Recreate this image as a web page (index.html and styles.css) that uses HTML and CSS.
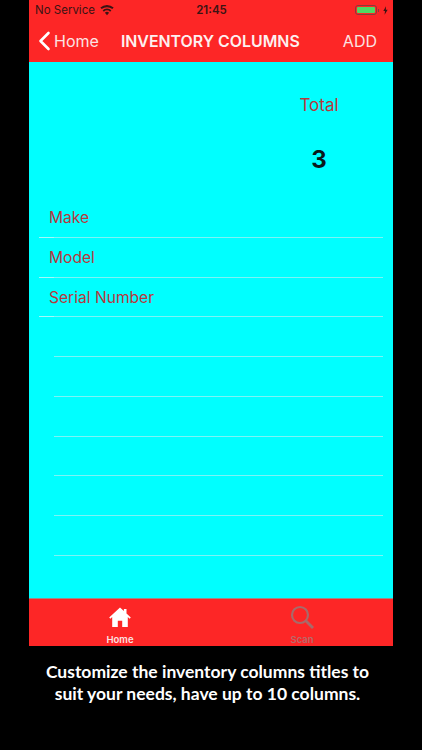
FILE: index.html
```html
<!DOCTYPE html>
<html lang="en">
<head>
    <meta charset="UTF-8">
    <meta name="viewport" content="width=device-width, initial-scale=1.0">
    <title>Inventory Columns</title>
    <link rel="stylesheet" href="styles.css">
</head>
<body>
    <div class="phone">
        <!-- status bar -->
        <div class="status-bar">
            <div class="status-left">
                <span>No Service</span>
                <svg class="wifi" viewBox="0 0 16 12" width="14" height="11">
                    <path d="M8 11.5 5.6 8.6a3.6 3.6 0 0 1 4.8 0z" fill="#3a1414"/>
                    <path d="M4.4 7.3 3 5.6a7.6 7.6 0 0 1 10 0l-1.4 1.7a5.5 5.5 0 0 0-7.2 0z" fill="#3a1414"/>
                    <path d="M1.9 4.4.4 2.7a11.5 11.5 0 0 1 15.2 0l-1.5 1.7a9.4 9.4 0 0 0-12.2 0z" fill="#3a1414"/>
                </svg>
            </div>
            <div class="status-time">21:45</div>
            <div class="status-right">
                <div class="battery"><div class="battery-fill"></div></div>
                <div class="battery-tip"></div>
                <svg class="bolt" viewBox="0 0 6 10" width="5" height="9">
                    <path d="M3.6 0 .4 5.6h2L1.9 10 5.6 4H3.4z" fill="#3a1414"/>
                </svg>
            </div>
        </div>

        <!-- nav bar -->
        <div class="nav-bar">
            <div class="nav-back">
                <svg viewBox="0 0 13 20" width="13" height="20">
                    <path d="M10.5 2 2.5 10l8 8" fill="none" stroke="#fff" stroke-width="2.6" stroke-linecap="round" stroke-linejoin="round"/>
                </svg>
                <span>Home</span>
            </div>
            <div class="nav-title">INVENTORY COLUMNS</div>
            <div class="nav-add">ADD</div>
        </div>

        <!-- content -->
        <div class="content">
            <div class="total">
                <div class="total-label">Total</div>
                <div class="total-value">3</div>
            </div>
            <div class="list">
                <div class="row row-full">Make</div>
                <div class="row row-full">Model</div>
                <div class="row row-full">Serial Number</div>
                <div class="row"></div>
                <div class="row"></div>
                <div class="row"></div>
                <div class="row"></div>
                <div class="row"></div>
                <div class="row"></div>
            </div>
        </div>

        <!-- tab bar -->
        <div class="tab-bar">
            <div class="tab tab-active">
                <svg viewBox="0 0 24 24" width="24" height="24">
                    <path d="M12 2.5 1.2 12.4l1.2 1.3 1.8-1.6V22h5.6v-6.2h4.4V22h5.6v-9.9l1.8 1.6 1.2-1.3L18.5 8.5V4h-2.6v2.1z" fill="#fff"/>
                </svg>
                <span>Home</span>
            </div>
            <div class="tab tab-off">
                <svg viewBox="0 0 24 24" width="24" height="24">
                    <circle cx="10" cy="10" r="8" fill="none" stroke="#a86a6a" stroke-width="2.2"/>
                    <path d="M15.8 15.8 23 23" fill="none" stroke="#a86a6a" stroke-width="2.8"/>
                </svg>
                <span>Scan</span>
            </div>
        </div>
    </div>

    <p class="caption">Customize the inventory columns titles to<br>suit your needs, have up to 10 columns.</p>
</body>
</html>
```

FILE: styles.css
```css
html, body {
    margin: 0;
    padding: 0;
    background: #000;
    height: 750px;
    overflow: hidden;
}

.phone {
    width: 364px;
    margin-left: 29px;
    font-family: Inter, "Liberation Sans", sans-serif;
}

/* status bar */
.status-bar {
    height: 20px;
    background: #fd2626;
    color: #3a1414;
    font-size: 11.5px;
    display: grid;
    grid-template-columns: 1fr auto 1fr;
    align-items: center;
    padding: 0 5px 0 6px;
}

.status-left {
    display: flex;
    align-items: center;
    gap: 5px;
}

.status-time {
    font-weight: 600;
    font-size: 11.5px;
}

.status-right {
    display: flex;
    align-items: center;
    justify-content: flex-end;
}

.battery {
    width: 22px;
    height: 10px;
    border: 1px solid #8a3a3a;
    border-radius: 3px;
    padding: 1px;
    box-sizing: border-box;
    display: flex;
}

.battery-fill {
    flex: 1;
    background: #4fd964;
    border-radius: 1px;
}

.battery-tip {
    width: 1px;
    height: 3px;
    background: #8a3a3a;
    margin: 0 4px 0 1px;
}

/* nav bar */
.nav-bar {
    height: 42px;
    background: #fd2626;
    color: #fff;
    display: flex;
    align-items: center;
    justify-content: space-between;
    font-size: 16px;
    padding: 0 16px 0 9px;
}

.nav-back {
    display: flex;
    align-items: center;
    gap: 3px;
    color: #fbe3e3;
}

.nav-title {
    font-weight: 600;
    font-size: 15.9px;
    margin-right: 21px;
    color: #fdf0f0;
}

.nav-add {
    color: #fbe3e3;
}

/* content */
.content {
    height: 536px;
    background: #00ffff;
    box-sizing: border-box;
    padding-top: 33px;
}

.total {
    width: 80px;
    margin-left: 250px;
    text-align: center;
}

.total-label {
    color: #b8383c;
    font-size: 17px;
    line-height: 21px;
}

.total-value {
    color: #0a1a1a;
    font-size: 24px;
    font-weight: 700;
    line-height: 30px;
    margin-top: 29px;
}

.list {
    margin-top: 23px;
}

.row {
    height: 39.75px;
    box-sizing: border-box;
    margin: 0 10px 0 25px;
    border-bottom: 1px solid #7df3f5;
    color: #b8383c;
    font-size: 15.6px;
    line-height: 40px;
}

.row-full {
    position: relative;
    margin-left: 10px;
    padding-left: 10px;
}

/* small lighter stub where the separator runs past the inset */
.row-full::after {
    content: "";
    position: absolute;
    left: 0;
    bottom: -1px;
    width: 15px;
    height: 1px;
    background: #a5f7f8;
}

/* tab bar */
.tab-bar {
    height: 48px;
    background: #fd2626;
    display: flex;
    border-top: 1px solid #9a8a8a;
    box-sizing: border-box;
}

.tab {
    flex: 1;
    display: flex;
    flex-direction: column;
    align-items: center;
    font-size: 9.5px;
    font-weight: 600;
    padding-top: 6px;
}

.tab span {
    line-height: 13px;
    margin-top: 4px;
}

.tab-active {
    color: #fbe3e3;
}

.tab-off {
    color: #b86a6a;
}

/* caption */
.caption {
    margin: 15px 0 0;
    padding-right: 7px;
    text-align: center;
    color: #fff;
    font-family: Lato, "Open Sans", sans-serif;
    font-weight: 700;
    font-size: 17.5px;
    line-height: 22px;
}
```
